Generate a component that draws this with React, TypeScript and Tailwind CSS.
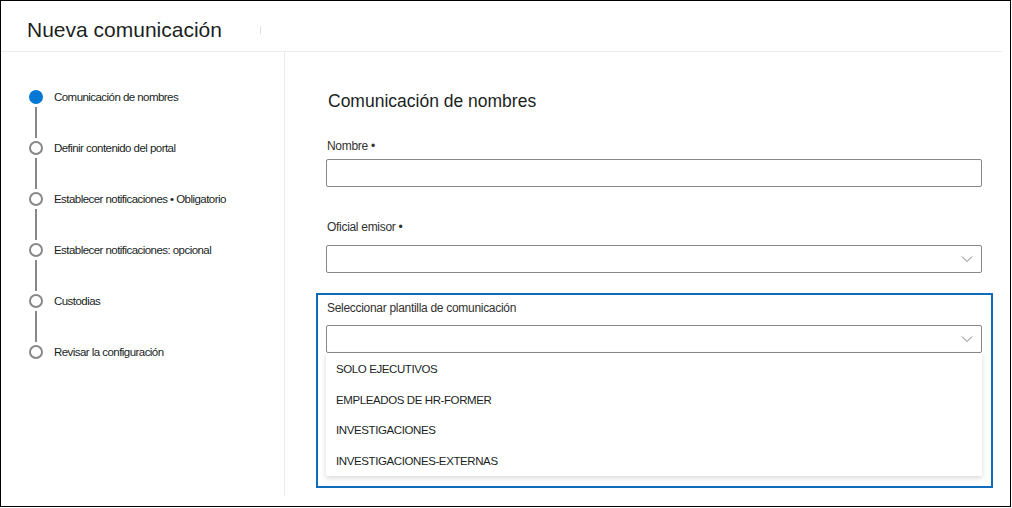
import React from 'react';

const STEPS = [
  { label: 'Comunicación de nombres', active: true },
  { label: 'Definir contenido del portal', active: false },
  { label: 'Establecer notificaciones • Obligatorio', active: false },
  { label: 'Establecer notificaciones: opcional', active: false },
  { label: 'Custodias', active: false },
  { label: 'Revisar la configuración', active: false },
];

const TEMPLATES = ['SOLO EJECUTIVOS', 'EMPLEADOS DE HR-FORMER', 'INVESTIGACIONES', 'INVESTIGACIONES-EXTERNAS'];

const Chevron = () => (
  <svg className="w-[12px] h-[8px] text-[#7a7a7a]" viewBox="0 0 12 8" fill="none" stroke="currentColor" strokeWidth="1">
    <path d="M1 1.5l5 5 5-5" />
  </svg>
);

const App: React.FC = () => {
  return (
    <div className="w-[1011px] h-[507px] border border-black bg-white text-[#201f1e] overflow-hidden" style={{ fontFamily: '"Liberation Sans", Arial, sans-serif' }}>
      {/* header */}
      <div className="h-[51px] mr-[8px] border-b border-[#edebe9] flex items-center">
        <h1 className="ml-[26px] text-[21px] leading-[26px] text-[#201f1e] mt-[7px]">Nueva comunicación</h1>
        <span className="ml-[38px] mt-[8px] w-px h-[8px] bg-[#e1dfdd]" />
      </div>

      <div className="flex h-[444px]">
        {/* wizard steps */}
        <div className="w-[284px] shrink-0 border-r border-[#edebe9] pt-[38px] pl-[28px]">
          {STEPS.map((step, i) => (
            <div key={i}>
              <div className="flex items-center h-[14px]">
                {step.active ? (
                  <span className="w-[14px] h-[14px] rounded-full bg-[#0078d4]" />
                ) : (
                  <span className="w-[14px] h-[14px] rounded-full border-2 border-[#8a8886]" />
                )}
                <span className="ml-[11px] text-[11.5px] leading-[14px] tracking-[-0.55px] text-[#201f1e]">{step.label}</span>
              </div>
              {i < STEPS.length - 1 && (
                <div className="w-[14px] flex justify-center py-[3px]">
                  <span className="w-[2px] h-[31px] bg-[#8a8886]" />
                </div>
              )}
            </div>
          ))}
        </div>

        {/* form */}
        <div className="flex-1 pl-[41px] pr-[28px]">
          <h2 className="mt-[37px] ml-[2px] text-[17.5px] leading-[24px] text-[#201f1e]">Comunicación de nombres</h2>

          <label className="block mt-[25px] ml-[1px] text-[12px] leading-[16px] tracking-[-0.3px] text-[#323130]">Nombre •</label>
          <div className="mt-[5px] h-[28px] border border-[#8a8886] rounded-[2px]" />

          <label className="block mt-[32px] ml-[1px] text-[12px] leading-[16px] tracking-[-0.3px] text-[#323130]">Oficial emisor •</label>
          <div className="mt-[10px] h-[28px] border border-[#8a8886] rounded-[2px] flex items-center justify-end pr-[8px]">
            <Chevron />
          </div>

          <div className="mt-[20px] -ml-[10px] -mr-[11px] h-[195px] border-2 border-[#0f6cbd] pl-[8px] pr-[9px] pt-[5px]">
            <label className="block ml-[1px] text-[12px] leading-[16px] tracking-[-0.3px] text-[#323130]">Seleccionar plantilla de comunicación</label>
            <div className="mt-[9px] h-[28px] border border-[#8a8886] rounded-[2px] flex items-center justify-end pr-[8px]">
              <Chevron />
            </div>
            <div className="h-[123px] bg-white shadow-[0_2px_5px_rgba(0,0,0,0.16)] pt-[1.5px]">
              {TEMPLATES.map((t) => (
                <div key={t} className="h-[30.5px] flex items-center pl-[10px] text-[11.5px] tracking-[-0.4px] text-[#201f1e]">
                  {t}
                </div>
              ))}
            </div>
          </div>
        </div>
      </div>
    </div>
  );
};

export default App;
